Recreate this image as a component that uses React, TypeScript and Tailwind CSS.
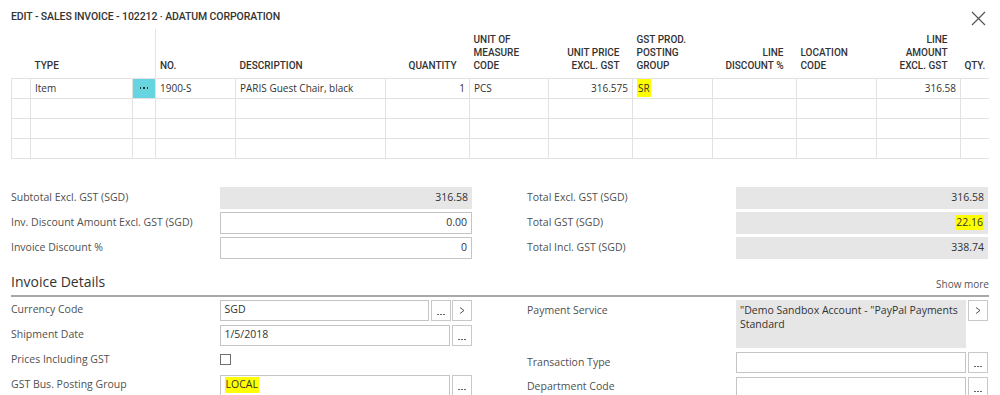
import React from "react";

const cols = [19, 102, 23, 80, 150, 84, 79, 84, 80, 84, 80, 84, 28];

type H = { lines: string[]; right?: boolean };
const headers: H[] = [
  { lines: [""] },
  { lines: ["TYPE"] },
  { lines: [""] },
  { lines: ["NO."] },
  { lines: ["DESCRIPTION"] },
  { lines: ["QUANTITY"], right: true },
  { lines: ["UNIT OF", "MEASURE", "CODE"] },
  { lines: ["UNIT PRICE", "EXCL. GST"], right: true },
  { lines: ["GST PROD.", "POSTING", "GROUP"] },
  { lines: ["LINE", "DISCOUNT %"], right: true },
  { lines: ["LOCATION", "CODE"] },
  { lines: ["LINE", "AMOUNT", "EXCL. GST"], right: true },
  { lines: ["QTY."] },
];

const body = '"Open Sans", "Noto Sans", sans-serif';
const head = 'Roboto, "Liberation Sans", sans-serif';

function Dots() {
  return (
    <button className="w-[20px] h-full border border-[#c8c8c8] bg-white flex items-end justify-center pb-[5px] shrink-0">
      <span className="flex gap-[1px]">
        <span className="w-[2px] h-[1px] bg-[#666]" />
        <span className="w-[2px] h-[1px] bg-[#666]" />
        <span className="w-[2px] h-[1px] bg-[#666]" />
      </span>
    </button>
  );
}

function Arrow() {
  return (
    <button className="w-[20px] h-[21px] border border-[#c8c8c8] bg-white flex items-center justify-center shrink-0">
      <svg width="6" height="7" viewBox="0 0 6 7">
        <path d="M1 0.5 L5 3.5 L1 6.5" fill="none" stroke="#555" strokeWidth="1" />
      </svg>
    </button>
  );
}

function SumRow({ label, value, gray, hl }: { label: string; value: string; gray?: boolean; hl?: boolean }) {
  return (
    <div className="flex h-[22px] items-center">
      <div className="w-[209px] text-[10.5px] text-[#505050]">{label}</div>
      <div
        className={
          "w-[252px] h-full flex items-center justify-end pr-[4px] text-[10.5px] text-[#333] " +
          (gray ? "bg-[#e6e6e6]" : "bg-white border border-[#c4c4c4]")
        }
      >
        {hl ? <span className="bg-[#ffff00] px-[1px]">{value}</span> : value}
      </div>
    </div>
  );
}

export default function App() {
  return (
    <div className="w-[1000px] h-[395px] bg-white overflow-hidden relative" style={{ fontFamily: body }}>
      <div className="flex items-start justify-between pl-[11px] pr-[14px] pt-[9px]">
        <div className="text-[10.5px] font-medium text-[#333] tracking-[-0.1px]" style={{ fontFamily: head }}>
          EDIT - SALES INVOICE - 102212 · ADATUM CORPORATION
        </div>
        <svg width="15" height="15" viewBox="0 0 15 15" className="mt-[2px]">
          <path d="M1 1 L14 14 M14 1 L1 14" stroke="#555" strokeWidth="1.2" />
        </svg>
      </div>

      <div className="pl-[11px] mt-[3px]">
        <table className="table-fixed border-collapse" style={{ width: 977 }}>
          <colgroup>
            {cols.map((w, i) => (
              <col key={i} style={{ width: w }} />
            ))}
          </colgroup>
          <thead>
            <tr className="h-[49px]">
              {headers.map((h, i) => (
                <th
                  key={i}
                  className={
                    "align-bottom pb-[6px] text-[10px] font-medium leading-[13px] text-[#333] uppercase " +
                    (h.right ? "text-right pr-[13px] pl-[2px]" : "text-left pl-[4px]") +
                    (i === 3 ? " border-l border-[#e4e4e4]" : "")
                  }
                  style={{ fontFamily: head }}
                >
                  {h.lines.map((l, j) => (
                    <div key={j} className="whitespace-nowrap">
                      {l}
                    </div>
                  ))}
                </th>
              ))}
            </tr>
          </thead>
          <tbody className="text-[10px] text-[#333]">
            {[0, 1, 2, 3].map((r) => (
              <tr key={r} className="h-[20px]">
                {cols.map((_, i) => {
                  const last = i === cols.length - 1;
                  let content: React.ReactNode = null;
                  let cls = "";
                  if (r === 0) {
                    if (i === 1) content = "Item";
                    if (i === 2) {
                      cls = "bg-[#67d5df]";
                      content = (
                        <span className="flex justify-center gap-[2px]">
                          <span className="w-[1.5px] h-[1.5px] bg-[#333]" />
                          <span className="w-[1.5px] h-[1.5px] bg-[#333]" />
                          <span className="w-[1.5px] h-[1.5px] bg-[#333]" />
                        </span>
                      );
                    }
                    if (i === 3) content = "1900-S";
                    if (i === 4) content = "PARIS Guest Chair, black";
                    if (i === 5) content = "1";
                    if (i === 6) content = "PCS";
                    if (i === 7) content = "316.575";
                    if (i === 8) content = <span className="bg-[#ffff00] px-[1px] py-[2px]">SR</span>;
                    if (i === 11) content = "316.58";
                  }
                  const right = i === 5 || i === 7 || i === 11;
                  return (
                    <td
                      key={i}
                      className={
                        "border-t border-b border-[#e2e2e2] whitespace-nowrap overflow-hidden p-0 " +
                        (last ? "" : "border-r ") +
                        (i === 0 ? "border-l " : "") +
                        (right ? "text-right pr-[4px] " : i === 2 ? "" : "pl-[4px] ") +
                        cls
                      }
                    >
                      {content}
                    </td>
                  );
                })}
              </tr>
            ))}
          </tbody>
        </table>
      </div>

      <div className="flex px-[11px] mt-[28px] gap-[55px]">
        <div className="w-[461px] flex flex-col gap-[3px]">
          <SumRow label="Subtotal Excl. GST (SGD)" value="316.58" gray />
          <SumRow label="Inv. Discount Amount Excl. GST (SGD)" value="0.00" />
          <SumRow label="Invoice Discount %" value="0" />
        </div>
        <div className="w-[461px] flex flex-col gap-[3px]">
          <SumRow label="Total Excl. GST (SGD)" value="316.58" gray />
          <SumRow label="Total GST (SGD)" value="22.16" gray hl />
          <SumRow label="Total Incl. GST (SGD)" value="338.74" gray />
        </div>
      </div>

      <div className="px-[11px] mt-[14px]">
        <div className="flex items-end justify-between border-b-2 border-[#a9a9a9] pb-[4px]">
          <div className="text-[14px] text-[#333] leading-[18px]">Invoice Details</div>
          <div className="text-[10px] text-[#555] leading-[14px]">Show more</div>
        </div>
      </div>

      <div className="flex px-[11px] mt-[3px] gap-[55px] text-[10.5px]">
        <div className="w-[461px] flex flex-col gap-[4px]">
          <div className="flex h-[21px] items-center">
            <div className="w-[209px] text-[#505050]">Currency Code</div>
            <div className="w-[210px] h-full border border-[#c4c4c4] flex items-center pl-[4px] text-[#333]">SGD</div>
            <div className="ml-[2px] h-full flex">
              <Dots />
            </div>
            <div className="ml-[1px]">
              <Arrow />
            </div>
          </div>
          <div className="flex h-[21px] items-center">
            <div className="w-[209px] text-[#505050]">Shipment Date</div>
            <div className="w-[231px] h-full border border-[#c4c4c4] flex items-center pl-[4px] text-[#333]">1/5/2018</div>
            <div className="ml-[2px] h-full flex">
              <Dots />
            </div>
          </div>
          <div className="flex h-[21px] items-center">
            <div className="w-[209px] text-[#505050]">Prices Including GST</div>
            <div className="w-[11px] h-[11px] border border-[#707070] bg-white mb-[2px]" />
          </div>
          <div className="flex h-[21px] items-center">
            <div className="w-[209px] text-[#505050]">GST Bus. Posting Group</div>
            <div className="w-[231px] h-full border border-[#c4c4c4] flex items-center pl-[4px] text-[#333]">
              <span className="bg-[#ffff00] px-[1px]">LOCAL</span>
            </div>
            <div className="ml-[2px] h-full flex">
              <Dots />
            </div>
          </div>
        </div>

        <div className="w-[461px] flex flex-col gap-[4px]">
          <div className="flex">
            <div className="w-[209px] text-[#505050] pt-[3px]">Payment Service</div>
            <div className="w-[230px] h-[48px] bg-[#e6e6e6] px-[4px] pt-[3px] text-[#333] leading-[14px]">
              "Demo Sandbox Account - "PayPal Payments Standard
            </div>
            <div className="ml-[2px]">
              <Arrow />
            </div>
          </div>
          <div className="flex h-[21px] items-center">
            <div className="w-[209px] text-[#505050] pt-[2px]">Transaction Type</div>
            <div className="w-[230px] h-full border border-[#c4c4c4]" />
            <div className="ml-[2px] h-full flex">
              <Dots />
            </div>
          </div>
          <div className="flex h-[21px] items-center">
            <div className="w-[209px] text-[#505050]">Department Code</div>
            <div className="w-[230px] h-full border border-[#c4c4c4]" />
            <div className="ml-[2px] h-full flex">
              <Dots />
            </div>
          </div>
        </div>
      </div>
    </div>
  );
}
